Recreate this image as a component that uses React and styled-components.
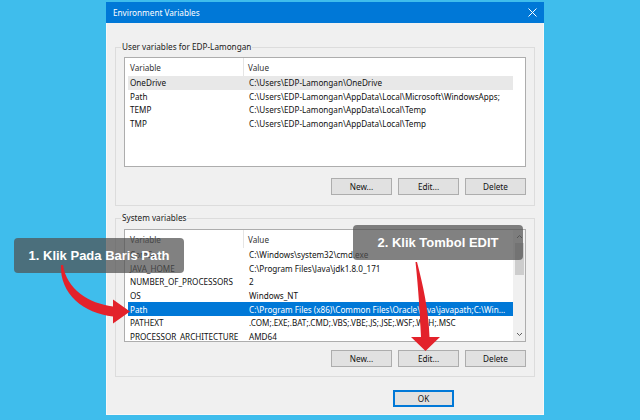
import React from "react";
import styled, { createGlobalStyle } from "styled-components";

const GlobalStyle = createGlobalStyle`
  html, body {
    margin: 0;
    padding: 0;
    background: #3fbdec;
  }
  body {
    font-family: "Noto Sans", "Open Sans", sans-serif;
  }
`;

const Page = styled.div`
  position: relative;
  width: 640px;
  height: 420px;
  overflow: hidden;
  box-sizing: border-box;
  padding: 2px 0 0 106px;
  background: #3fbdec;
`;

const Window = styled.div`
  width: 438px;
  height: 413px;
  box-sizing: border-box;
  background: #f0f0f0;
  border: 1px solid #f8f8f8;
  border-top: none;
  display: flex;
  flex-direction: column;
`;

const TitleBar = styled.div`
  height: 21px;
  margin: 0 -1px;
  background: #0078d7;
  display: flex;
  align-items: center;
  justify-content: space-between;
  padding: 0 7px;
  color: #fff;
  font-size: 8.2px;
`;

const Content = styled.div`
  padding: 0 8px;
  display: flex;
  flex-direction: column;
`;

const Group = styled.fieldset`
  margin: ${(p) => p.$top}px 0 0;
  border: 1px solid #dcdcdc;
  padding: 0 8px ${(p) => p.$bottom}px;
  min-width: 0;
`;

const Legend = styled.legend`
  font-size: 8.2px;
  line-height: 10px;
  color: #1a1a1a;
  padding: 0 1px;
  margin-left: -3px;
`;

const ListBox = styled.div`
  margin-top: ${(p) => p.$top}px;
  height: ${(p) => p.$height}px;
  box-sizing: border-box;
  border: 1px solid #adadad;
  background: #fff;
  display: flex;
  overflow: hidden;
`;

const Table = styled.div`
  flex: 1;
  min-width: 0;
  display: flex;
  flex-direction: column;
  font-size: 8.15px;
  color: #111;
`;

const HeaderRow = styled.div`
  height: 18px;
  flex: none;
  display: grid;
  grid-template-columns: 119px 1fr;
  align-items: stretch;
  color: #333;
`;

const HeaderCell = styled.div`
  display: flex;
  align-items: center;
  padding-left: ${(p) => (p.$first ? 5 : 4)}px;
  border-right: ${(p) => (p.$first ? "1px solid #e5e5e5" : "none")};
`;

const Row = styled.div`
  width: 385px;
  height: 13.6px;
  flex: none;
  margin-left: 3px;
  display: grid;
  grid-template-columns: 119px 1fr;
  align-items: center;
  background: ${(p) => (p.$selected ? "#0078d7" : p.$hover ? "#e8e8e8" : "transparent")};
  color: ${(p) => (p.$selected ? "#fff" : "#111")};
`;

const Cell = styled.div`
  padding-left: 2px;
  padding-right: ${(p) => p.$pad || 0}px;
  white-space: nowrap;
  overflow: hidden;
  text-overflow: ellipsis;
`;

const ScrollBar = styled.div`
  width: 12px;
  flex: none;
  background: #f0f0f0;
  display: flex;
  flex-direction: column;
  align-items: center;
`;

const ScrollArrow = styled.div`
  height: 13px;
  width: 100%;
  display: flex;
  align-items: center;
  justify-content: center;
`;

const Thumb = styled.div`
  width: 9px;
  height: 32px;
  background: #cdcdcd;
`;

const Spacer = styled.div`
  flex: 1;
`;

const ButtonRow = styled.div`
  display: flex;
  justify-content: flex-end;
  gap: 6px;
  margin-top: ${(p) => p.$top}px;
  padding-right: ${(p) => p.$right || 0}px;
`;

const Button = styled.div`
  width: 61px;
  height: 17px;
  box-sizing: border-box;
  background: #e1e1e1;
  border: 1px solid ${(p) => (p.$default ? "#0078d7" : "#adadad")};
  box-shadow: ${(p) => (p.$default ? "inset 0 0 0 1px #0078d7" : "none")};
  display: flex;
  align-items: center;
  justify-content: center;
  font-size: 8.2px;
  color: #111;
`;

const Callout = styled.div`
  position: absolute;
  left: ${(p) => p.$x}px;
  top: ${(p) => p.$y}px;
  width: 170px;
  height: 35px;
  border-radius: 4px;
  background: rgba(80, 80, 80, 0.72);
  color: #fff;
  font-family: "Liberation Sans", Arial, sans-serif;
  font-weight: bold;
  font-size: 13px;
  display: flex;
  align-items: center;
  justify-content: center;
`;

const Overlay = styled.svg`
  position: absolute;
  left: 0;
  top: 0;
  pointer-events: none;
`;

const userVars = [
  ["OneDrive", "C:\\Users\\EDP-Lamongan\\OneDrive"],
  ["Path", "C:\\Users\\EDP-Lamongan\\AppData\\Local\\Microsoft\\WindowsApps;"],
  ["TEMP", "C:\\Users\\EDP-Lamongan\\AppData\\Local\\Temp"],
  ["TMP", "C:\\Users\\EDP-Lamongan\\AppData\\Local\\Temp"],
];

const systemVars = [
  ["ComSpec", "C:\\Windows\\system32\\cmd.exe"],
  ["JAVA_HOME", "C:\\Program Files\\Java\\jdk1.8.0_171"],
  ["NUMBER_OF_PROCESSORS", "2"],
  ["OS", "Windows_NT"],
  ["Path", "C:\\Program Files (x86)\\Common Files\\Oracle\\Java\\javapath;C:\\Windows\\system32;C:\\Windows"],
  ["PATHEXT", ".COM;.EXE;.BAT;.CMD;.VBS;.VBE;.JS;.JSE;.WSF;.WSH;.MSC"],
  ["PROCESSOR_ARCHITECTURE", "AMD64"],
];

function VarTable({ rows, hover, selected }) {
  return (
    <Table>
      <HeaderRow>
        <HeaderCell $first>Variable</HeaderCell>
        <HeaderCell>Value</HeaderCell>
      </HeaderRow>
      {rows.map(([name, value], i) => (
        <Row key={name + i} $hover={i === hover} $selected={i === selected}>
          <Cell>{name}</Cell>
          <Cell $pad={6}>{value}</Cell>
        </Row>
      ))}
    </Table>
  );
}

function Chevron({ down }) {
  return (
    <svg width="7" height="5" viewBox="0 0 7 5">
      <path
        d={down ? "M1 1 L3.5 3.5 L6 1" : "M1 4 L3.5 1.5 L6 4"}
        fill="none"
        stroke="#606060"
        strokeWidth="1"
      />
    </svg>
  );
}

export default function App() {
  return (
    <>
      <GlobalStyle />
      <Page>
        <Window>
          <TitleBar>
            <span>Environment Variables</span>
            <svg width="9" height="9" viewBox="0 0 9 9">
              <path d="M0.5 0.5 L8.5 8.5 M8.5 0.5 L0.5 8.5" stroke="#fff" strokeWidth="1" />
            </svg>
          </TitleBar>
          <Content>
            <Group $top={19} $bottom={10}>
              <Legend>User variables for EDP-Lamongan</Legend>
              <ListBox $top={5} $height={110}>
                <VarTable rows={userVars} hover={0} />
              </ListBox>
              <ButtonRow $top={11}>
                <Button>New...</Button>
                <Button>Edit...</Button>
                <Button>Delete</Button>
              </ButtonRow>
            </Group>
            <Group $top={7} $bottom={9}>
              <Legend>System variables</Legend>
              <ListBox $top={6} $height={113}>
                <VarTable rows={systemVars} selected={4} />
                <ScrollBar>
                  <ScrollArrow>
                    <Chevron />
                  </ScrollArrow>
                  <Thumb />
                  <Spacer />
                  <ScrollArrow>
                    <Chevron down />
                  </ScrollArrow>
                </ScrollBar>
              </ListBox>
              <ButtonRow $top={8}>
                <Button>New...</Button>
                <Button>Edit...</Button>
                <Button>Delete</Button>
              </ButtonRow>
            </Group>
            <ButtonRow $top={13} $right={81}>
              <Button $default>OK</Button>
            </ButtonRow>
          </Content>
        </Window>

        <Callout $x={14} $y={238}>1. Klik Pada Baris Path</Callout>
        <Callout $x={353} $y={225}>2. Klik Tombol EDIT</Callout>

        <Overlay width="640" height="420" viewBox="0 0 640 420">
          <path
            d="M63 265 C66.5 289 89 303.5 113 306.5 L113 299.5 L130 311.5 L113 323.5 L113 316.5 C84 313.5 59.5 294 61 265 Z"
            fill="#e3222b"
          />
          <path
            d="M415.5 262 C418.5 290 420 315 421 337 L411 337 L425.5 351 L440 337 L429.5 337 C428.5 310 423 285 417 262 Z"
            fill="#e3222b"
          />
        </Overlay>
      </Page>
    </>
  );
}
